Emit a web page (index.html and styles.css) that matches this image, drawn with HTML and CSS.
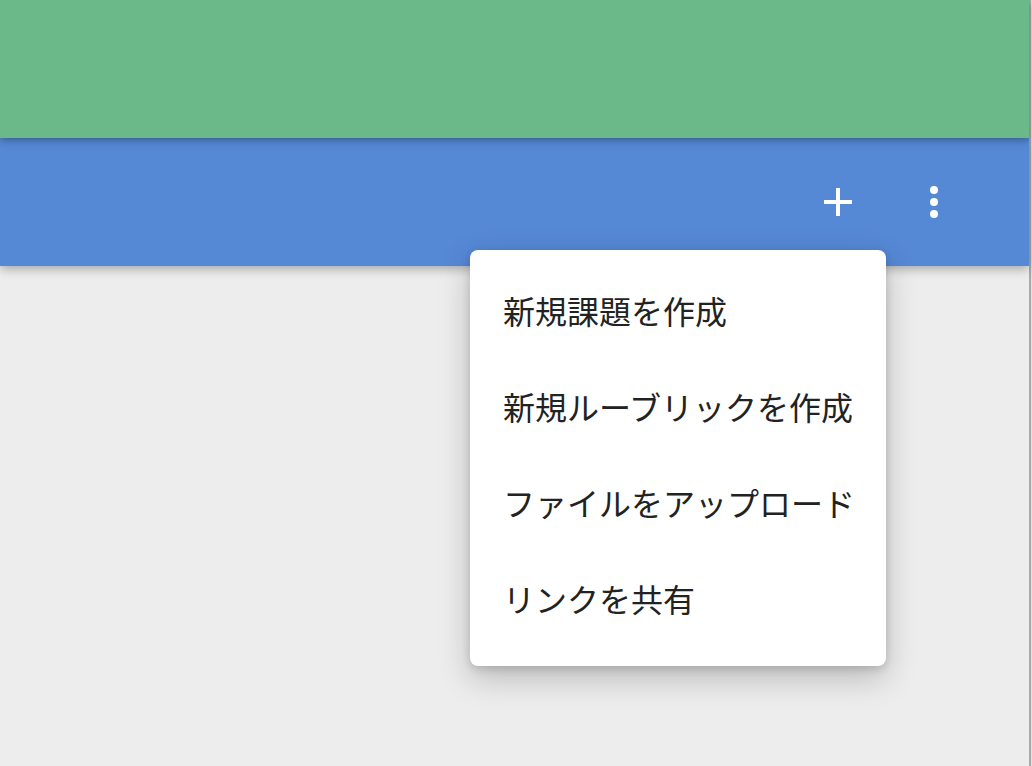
FILE: index.html
```html
<!DOCTYPE html>
<html lang="ja">
<head>
<meta charset="utf-8">
<link rel="stylesheet" href="styles.css">
</head>
<body>
<div class="frame">
  <div class="app">
    <header class="topbar"></header>
    <div class="toolbar">
      <button class="icon-btn" aria-label="追加">
        <svg viewBox="0 0 24 24" width="48" height="48"><path d="M19 13h-6v6h-2v-6H5v-2h6V5h2v6h6v2z" fill="#fff"/></svg>
      </button>
      <button class="icon-btn" aria-label="その他">
        <svg viewBox="0 0 24 24" width="48" height="48"><circle cx="12" cy="6" r="2" fill="#fff"/><circle cx="12" cy="12" r="2" fill="#fff"/><circle cx="12" cy="18" r="2" fill="#fff"/></svg>
      </button>
    </div>
    <main class="content"></main>
    <ul class="menu">
      <li class="menu-item">新規課題を作成</li>
      <li class="menu-item">新規ルーブリックを作成</li>
      <li class="menu-item">ファイルをアップロード</li>
      <li class="menu-item">リンクを共有</li>
    </ul>
  </div>
  <div class="edge"></div>
</div>
</body>
</html>
```
FILE: styles.css
```css
html, body {
  margin: 0;
  padding: 0;
  height: 100%;
  overflow: hidden;
}
body {
  font-family: "Noto Sans CJK JP", "Noto Sans", sans-serif;
  background: #ededed;
}
.frame {
  display: flex;
  height: 766px;
}
.app {
  position: relative;
  width: 1029px;
  display: flex;
  flex-direction: column;
  background: #ededed;
}
.edge {
  width: 2px;
  background: #a9a9a9;
  border-right: 1px solid #e2e2e2;
}
.topbar {
  height: 138px;
  background: #6bb888;
  position: relative;
  z-index: 3;
  box-shadow: 0 2px 8px rgba(0,0,0,0.35);
}
.toolbar {
  height: 128px;
  background: #5588d5;
  position: relative;
  z-index: 2;
  box-shadow: 0 3px 10px rgba(0,0,0,0.3);
  display: flex;
  justify-content: flex-end;
  align-items: center;
  padding-right: 47px;
}
.icon-btn {
  width: 96px;
  height: 96px;
  border: 0;
  background: transparent;
  padding: 0;
  display: flex;
  align-items: center;
  justify-content: center;
}
.content {
  flex: 1;
}
.menu {
  position: absolute;
  left: 470px;
  top: 250px;
  width: 416px;
  margin: 0;
  padding: 16px 0;
  list-style: none;
  background: #fff;
  border-radius: 8px;
  box-shadow: 0 12px 32px rgba(0,0,0,0.22), 0 3px 8px rgba(0,0,0,0.14);
  z-index: 5;
  box-sizing: border-box;
}
.menu-item {
  height: 96px;
  line-height: 88px;
  padding-left: 33px;
  font-size: 32px;
  color: #222;
  white-space: nowrap;
}
```
